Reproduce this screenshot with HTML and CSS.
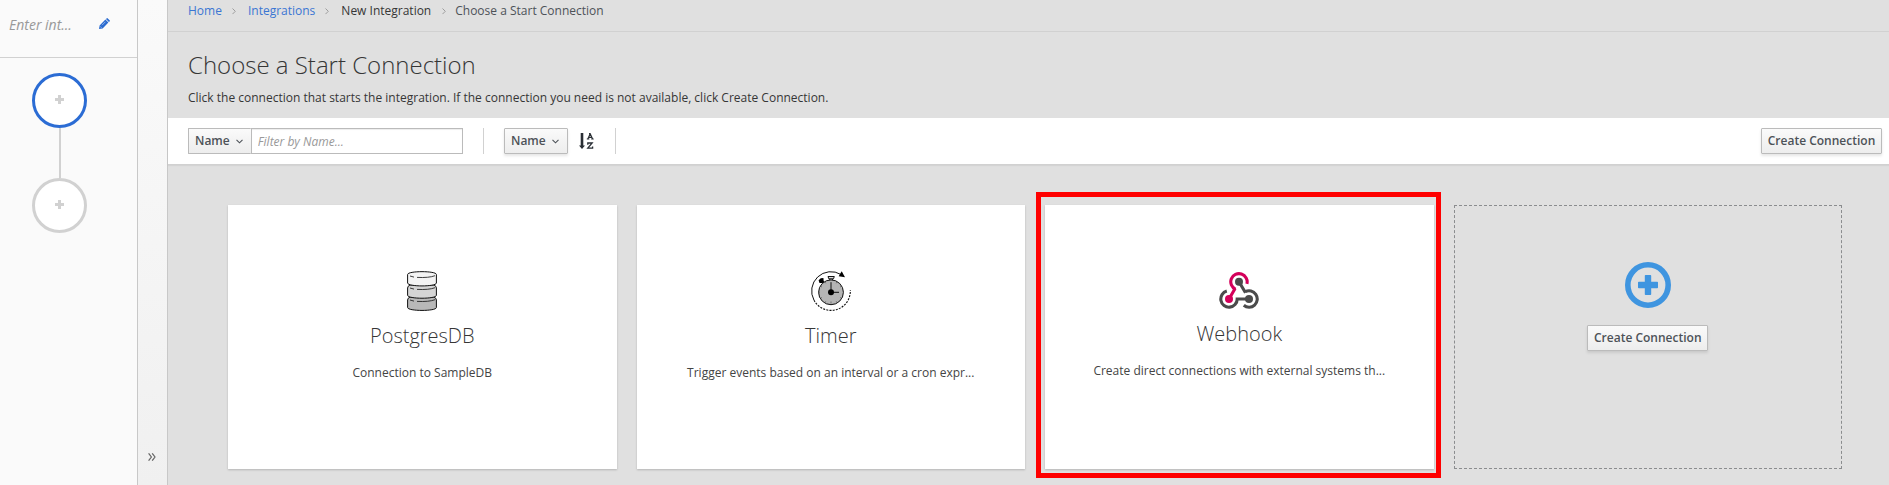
FILE: index.html
```
<!DOCTYPE html>
<html lang="en">
<head>
<meta charset="utf-8">
<title>Choose a Start Connection</title>
<link rel="stylesheet" href="styles.css">
</head>
<body>
<div class="app">
  <aside class="flow">
    <div class="flow-name"><span class="flow-placeholder">Enter int...</span>
      <svg class="pencil" width="11" height="11" viewBox="0 0 11 11"><path d="M0 11 .6 7.4 6.4 1.6 9.4 4.6 3.6 10.4Z M6.9 1.1 7.6.4Q8.2-.2 8.8.4L10.6 2.2Q11.2 2.8 10.6 3.4L9.9 4.1Z" fill="#2a6bd0"/><path d="M1.2 8.4 2.6 9.8M3 7.2 6.4 3.8" stroke="#fafafa" stroke-width=".5"/></svg>
    </div>
    <div class="steps">
      <div class="step active"><svg width="9" height="9"><path d="M3 0h3v3h3v3H6v3H3V6H0V3h3z"/></svg></div>
      <div class="step-line"></div>
      <div class="step"><svg width="9" height="9"><path d="M3 0h3v3h3v3H6v3H3V6H0V3h3z"/></svg></div>
    </div>
  </aside>
  <div class="strip"><svg width="8" height="8" viewBox="0 0 8 8"><path d="M.6.3 3.4 4 .6 7.7M4.2.3 7 4 4.2 7.7" fill="none" stroke="#666" stroke-width="1.2"/></svg></div>
  <main class="main">
    <nav class="breadcrumb">
      <a>Home</a><svg class="sep" width="4" height="7"><path d="M.5.5 3.3 3.3 .5 6.1"/></svg>
      <a>Integrations</a><svg class="sep" width="4" height="7"><path d="M.5.5 3.3 3.3 .5 6.1"/></svg>
      <span class="crumb">New Integration</span><svg class="sep last" width="4" height="7"><path d="M.5.5 3.3 3.3 .5 6.1"/></svg>
      <span class="current">Choose a Start Connection</span>
    </nav>
    <header class="heading">
      <h1>Choose a Start Connection</h1>
      <p>Click the connection that starts the integration. If the connection you need is not available, click Create Connection.</p>
    </header>
    <div class="toolbar">
      <div class="filter">
        <button class="btn flat">Name <svg class="caret" width="7" height="5"><path d="M.5.8 3.5 3.8 6.5.8"/></svg></button>
        <input class="filter-input" type="text" placeholder="Filter by Name...">
      </div>
      <div class="divider"></div>
      <button class="btn">Name <svg class="caret" width="7" height="5"><path d="M.5.8 3.5 3.8 6.5.8"/></svg></button>
      <svg class="sort" width="15" height="16" viewBox="0 0 15 16" fill="none" stroke="#292e34"><path d="M3 0V14" stroke-width="2.6"/><path d="M0 12.6H6L3 16Z" fill="#292e34" stroke="none"/><path d="M8.9 5.8 11.2.8 13.5 5.8M9.6 4.3H12.9M7.8 6H10.4M12.2 6H14.7M10 .6H11.6" stroke-width="1.2"/><path d="M8.8 11.7V10H13.2L8.8 15.2H13.6V13.4" stroke-width="1.3"/></svg>
      <div class="divider"></div>
      <button class="btn wide create">Create Connection</button>
    </div>
    <section class="cards">
      <article class="card">
        <svg class="icon" width="30" height="40" viewBox="0 0 30 40" stroke="#111" stroke-width="1">
          <path d="M.6 29V36.5C.6 40.4 29.4 40.4 29.4 36.5V29Q29.4 27 27 26H3Q.6 27 .6 29Z" fill="#b8b8b8"/>
          <path d="M.6 17V24.3C.6 28.2 29.4 28.2 29.4 24.3V17Q29.4 15 27 14H3Q.6 15 .6 17Z" fill="#d5d5d5"/>
          <path d="M.6 3.5V12C.6 15.9 29.4 15.9 29.4 12V3.5C29.4-.3.6-.3.6 3.5Z" fill="#f4f4f4"/>
          <path d="M3 5 7 6.1M10 6.4Q22 7 28 4.7M3 17 7 18.1M10 18.4Q22 19 28 16.7M3 29 7 30.1M10 30.4Q22 31 28 28.7" fill="none" stroke-width=".8"/>
        </svg>
        <h2>PostgresDB</h2>
        <p>Connection to SampleDB</p>
      </article>
      <article class="card">
        <svg class="icon" width="40" height="40" viewBox="0 0 40 40" fill="none" stroke="#111">
          <path d="M3 29.2A19.3 19.3 0 0 1 30 3.5" stroke-width="1"/>
          <path d="M3 29.2A19.3 19.3 0 0 0 39.3 19" stroke-width="1.1" stroke-dasharray="2 1.2"/>
          <path d="M30.7.3 34 6.2 27.7 5.2Z" fill="#000" stroke="none"/>
          <path d="M7.6 9.3 9.8 7.3 12.4 7 12.7 10 15 12.7 13.2 14 11.2 12.1 8.5 12Z" fill="#000" stroke="none"/>
          <path d="M17 5.5H23.3L22.5 7.8H17.8ZM18.8 8V9.3M21.4 8V9.3" fill="#ddd"/>
          <circle cx="20" cy="21.3" r="12.4" fill="#b5b5b5" stroke-width="1"/>
          <path d="M20 21.3V11.2M20 21.3H28"/>
          <circle cx="20" cy="21.3" r="3" fill="#000" stroke="none"/>
          <path d="M20 30.5v2M14.8 30.3l-.9 1.5M25.2 30.3l.9 1.5M11 26.5l-1.5.9M29 26.5l1.5.9M9 21.3H7.8M11 16.1l-1.5-.9M29 16.1l1.5-.9M14.8 12.3l-.9-1.5M25.2 12.3l.9-1.5" stroke="#555" stroke-width=".7"/>
        </svg>
        <h2>Timer</h2>
        <p>Trigger events based on an interval or a cron expr...</p>
      </article>
      <article class="card webhook">
        <svg class="icon" width="40" height="37" viewBox="0 0 40 37" fill="none" stroke-width="3.1">
          <path d="M7.8 19.1A8.2 8.2 0 1 0 18.2 27H29.5" stroke="#4b4b4b"/>
          <path d="M20 9.7 26.5 20.8M26.3 19.7A8.2 8.2 0 1 1 24.8 33.3" stroke="#4b4b4b"/>
          <path d="M10 27 16.1 16.4M16.6 17.3A8.2 8.2 0 1 1 27.9 11.9" stroke="#d4005a"/>
          <circle cx="20" cy="9.7" r="4" fill="#4b4b4b" stroke="none"/><circle cx="30" cy="27" r="4" fill="#4b4b4b" stroke="none"/><circle cx="10" cy="27" r="4" fill="#d4005a" stroke="none"/>
        </svg>
        <h2>Webhook</h2>
        <p>Create direct connections with external systems th...</p>
        <div class="highlight"></div>
      </article>
      <article class="card new">
        <svg class="plus" width="46" height="46"><circle cx="23" cy="23" r="20.2" fill="none" stroke="#3f95e0" stroke-width="5.6"/><path d="M20.6 13h4.8q.8 0 .8.8v6h6q.8 0 .8.8v4.8q0 .8-.8.8h-6v6q0 .8-.8.8h-4.8q-.8 0-.8-.8v-6h-6q-.8 0-.8-.8v-4.8q0-.8.8-.8h6v-6q0-.8.8-.8z" fill="#3f95e0"/></svg>
        <button class="btn wide">Create Connection</button>
      </article>
    </section>
  </main>
</div>
</body>
</html>
```
FILE: styles.css
```
* { box-sizing: border-box; }
body { margin: 0; overflow: hidden; font-family: "Open Sans", sans-serif; font-size: 12px; line-height: 20px; color: #444; }
h1, h2, p { margin: 0; }
.app { display: flex; height: 485px; background: #e0e0e0; }
.flow { width: 138px; flex: none; background: #fafafa; border-right: 1px solid #c8c8c8; }
.flow-name { height: 58px; display: flex; align-items: flex-start; justify-content: space-between; padding: 15px 27px 0 9px; border-bottom: 1px solid #d1d1d1; }
.flow-placeholder { font-size: 14px; font-style: italic; color: #999; }
.pencil { margin-top: 3px; }
.steps { display: flex; flex-direction: column; align-items: center; padding: 15px 18px 0 0; }
.step { width: 55px; height: 55px; border: 3px solid #d1d1d1; border-radius: 50%; background: #fff; display: flex; align-items: center; justify-content: center; fill: #d1d1d1; padding-bottom: 2px; }
.step.active { border-color: #2b6cd4; }
.step-line { width: 2px; height: 50px; margin-left: 1px; background: #d1d1d1; }
.strip { width: 30px; flex: none; background: linear-gradient(#fafafa, #f0f0f0); border-right: 1px solid #c8c8c8; display: flex; align-items: flex-end; justify-content: center; padding: 0 1px 24px 0; }
.main { flex: 1; min-width: 0; }
.breadcrumb { height: 32px; display: flex; align-items: flex-start; padding: 1px 0 0 20px; border-bottom: 1px solid #d1d1d1; }
.breadcrumb a { color: #3a76d3; }
.crumb { color: #363636; }
.current { color: #4d5258; }
.breadcrumb .sep { flex: none; margin: 7px 12px 0 10px; fill: none; stroke: #9c9c9c; }
.breadcrumb .sep.last { margin-right: 9px; margin-left: 11px; }
.heading { height: 86px; padding: 20px 0 0 20px; }
h1 { font-size: 24px; font-weight: 300; line-height: 26px; color: #363636; }
.heading p { margin-top: 10px; color: #363636; }
.toolbar { height: 47px; display: flex; align-items: flex-start; padding: 10px 7px 0 20px; background: #fff; border-bottom: 1px solid #d1d1d1; box-shadow: 0 1px 1px rgba(0,0,0,.05); }
.filter { display: flex; width: 275px; }
.btn { height: 26px; padding: 1px 6px 2px; font: 600 12px/20px "Open Sans", sans-serif; color: #4d5258; border: 1px solid #bbb; border-radius: 1px; background: linear-gradient(#fafafa, #ededed); box-shadow: 0 2px 3px rgba(3,3,3,.1); white-space: nowrap; }
.btn.flat { box-shadow: none; border-right: 0; }
.btn.wide { width: 121px; padding-left: 0; padding-right: 0; }
.caret { margin: 0 2px 1px 3px; fill: none; stroke: #4d5258; stroke-width: 1.1; }
.filter-input { flex: 1; min-width: 0; height: 26px; border: 1px solid #bbb; padding: 2px 6px 1px; font: 12px "Open Sans", sans-serif; box-shadow: inset 0 1px 1px rgba(3,3,3,.075); }
.filter-input::placeholder { color: #999; font-style: italic; opacity: 1; }
.divider { width: 1px; height: 26px; margin: 0 20px; background: #d1d1d1; }
.sort { margin: 5px 1px 0 11px; }
.create { margin-left: auto; }
.cards { display: grid; grid-template-columns: repeat(4, 1fr); gap: 20px; padding: 40px 47px 0 60px; }
.card { height: 264px; padding-top: 66px; display: flex; flex-direction: column; align-items: center; background: #fff; box-shadow: 0 1px 2px rgba(3,3,3,.2); }
.card h2 { margin-top: 12px; font-size: 20px; font-weight: 300; line-height: 26px; color: #363636; }
.card p { margin-top: 14px; }
.webhook { position: relative; padding-top: 67px; }
.highlight { position: absolute; left: -9px; right: -7px; top: -13px; bottom: -9px; border: 5px solid #f00; }
.card.new { background: none; box-shadow: none; border: 1px dashed #8b8d8f; padding-top: 56px; }
.new .btn { margin-top: 17px; }
```
